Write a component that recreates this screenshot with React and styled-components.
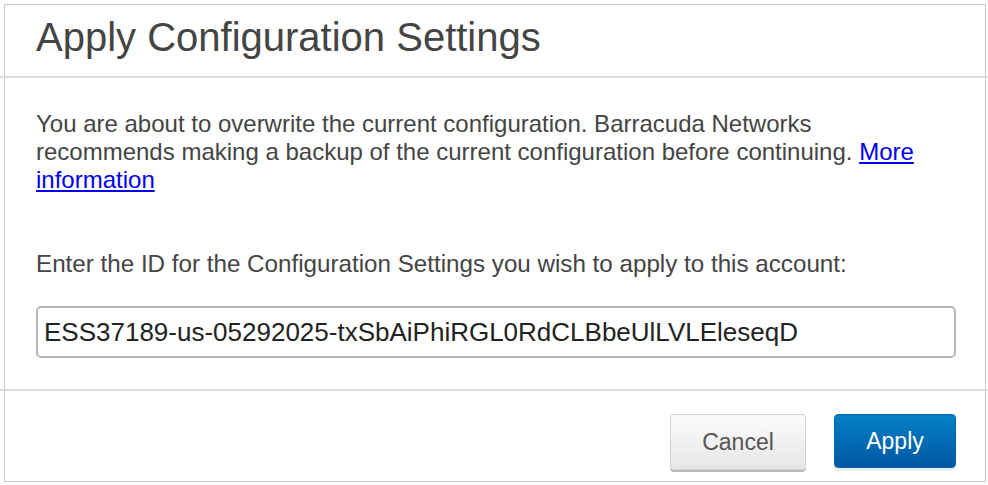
import styled, { createGlobalStyle } from "styled-components"

const Global = createGlobalStyle`
	html, body {
		margin: 0;
		padding: 0;
		background: #fff;
	}
	body {
		font-family: "Liberation Sans", Arial, sans-serif;
		color: #444;
	}
`

const Dialog = styled.section`
	margin: 4px 2px 0 4px;
	border: 1px solid #c8c8c8;
	height: 478px;
	box-sizing: border-box;
	display: flex;
	flex-direction: column;
`

const Header = styled.header`
	height: 71px;
	padding: 0 31px;
	display: flex;
	align-items: flex-start;
`

const Title = styled.h1`
	margin: 0;
	font-weight: normal;
	font-size: 40px;
	line-height: 46px;
	padding-top: 9px;
	color: #444;
`

// divider lines run past the dialog border
const Divider = styled.div`
	height: 2px;
	background: #dcdcdc;
	margin: 0 -3px 0 -5px;
`

const Body = styled.div`
	padding: 32px 29px 0 31px;
	height: 311px;
	box-sizing: border-box;
`

const Text = styled.p`
	margin: 0;
	font-size: ${p => p.$size || 24}px;
	line-height: 28px;
	color: #444;
	white-space: nowrap;
`

const Link = styled.a`
	color: #0000ee;
	text-decoration: underline;
`

const Label = styled(Text)`
	margin-top: 56px;
`

const Input = styled.input`
	display: block;
	margin-top: 28px;
	width: 100%;
	height: 52px;
	box-sizing: border-box;
	border: 2px solid #b8b8b8;
	border-radius: 5px;
	padding: 0 6px;
	font-family: "Liberation Sans", Arial, sans-serif;
	font-size: 26px;
	color: #222;
	outline: none;
`

const Footer = styled.footer`
	flex: 1;
	display: flex;
	justify-content: flex-end;
	align-items: flex-start;
	gap: 28px;
	padding: 23px 29px 0 0;
`

const Button = styled.button`
	font-family: "Liberation Sans", Arial, sans-serif;
	font-size: 23px;
	height: 56px;
	box-sizing: border-box;
	border-radius: 4px;
	cursor: pointer;
	padding: 0;
	width: ${p => p.$w}px;
	${p => p.$primary ? `
		color: #fff;
		background: linear-gradient(#0580c6, #0057a3);
		border: 1px solid #0067b0;
		box-shadow: 0 3px 0 #ececec;
		height: 54px;
	` : `
		color: #555;
		background: linear-gradient(#fbfbfb, #e6e6e6);
		border: 1px solid #d2d2d2;
		box-shadow: 0 2px 0 #b8b8b8;
	`}
`

export default function App() {
	return (
		<>
			<Global />
			<Dialog>
				<Header>
					<Title>Apply Configuration Settings</Title>
				</Header>
				<Divider />
				<Body>
					<Text>
						You are about to overwrite the current configuration. Barracuda Networks<br />
						recommends making a backup of the current configuration before continuing.{" "}
						<Link href="#">More<br />information</Link>
					</Text>
					<Label $size={24.2}>Enter the ID for the Configuration Settings you wish to apply to this account:</Label>
					<Input defaultValue="ESS37189-us-05292025-txSbAiPhiRGL0RdCLBbeUlLVLEleseqD" />
				</Body>
				<Divider />
				<Footer>
					<Button $w={136}>Cancel</Button>
					<Button $primary $w={122}>Apply</Button>
				</Footer>
			</Dialog>
		</>
	)
}
